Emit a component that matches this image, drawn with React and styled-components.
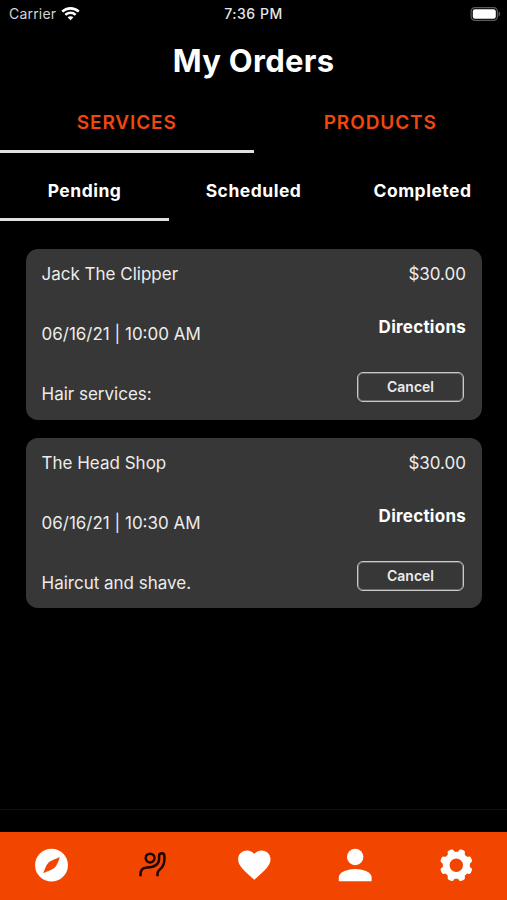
import styled, { createGlobalStyle } from "styled-components";
import { useState } from "react";

const GlobalStyle = createGlobalStyle`
  * {
    box-sizing: border-box;
  }
  body {
    margin: 0;
    background-color: #000;
    color: #fff;
    font-family: Inter, "Liberation Sans", sans-serif;
  }
  button {
    padding: 0;
    border: none;
    background: none;
    color: inherit;
    font-family: inherit;
    cursor: pointer;
  }
`;

const Screen = styled.div`
  width: 507px;
  height: 900px;
  display: flex;
  flex-direction: column;
  background-color: #000;
  overflow: hidden;
`;
const StatusBar = styled.div`
  height: 27px;
  padding: 0 6px 0 9px;
  display: grid;
  grid-template-columns: 1fr auto 1fr;
  align-items: center;
  font-size: 14px;
  line-height: 27px;
`;
const Carrier = styled.div`
  display: flex;
  align-items: center;
  gap: 5px;
  color: #d4d4d4;
  letter-spacing: 0.2px;
`;
const Clock = styled.div`
  margin-right: 3px;
  color: #e6e6e6;
  font-weight: 500;
  letter-spacing: 0.5px;
`;
const BatteryBox = styled.div`
  display: flex;
  justify-content: flex-end;
`;
const Title = styled.h1`
  height: 66px;
  margin: 0;
  text-align: center;
  font-size: 31px;
  font-weight: 700;
  line-height: 67px;
  letter-spacing: 0.3px;
`;
const Tabs = styled.div`
  display: flex;
`;
const MainTab = styled.button`
  flex: 1;
  height: 60px;
  padding-top: 1px;
  border-bottom: 3px solid ${(props) => (props.$active ? "#e0e0e0" : "transparent")};
  color: #f0470f;
  font-size: 19px;
  font-weight: 600;
  letter-spacing: 0.9px;
`;
const SubTab = styled.button`
  flex: 1;
  height: 68px;
  padding-top: 9px;
  border-bottom: 3px solid ${(props) => (props.$active ? "#e0e0e0" : "transparent")};
  font-size: 17.5px;
  font-weight: 700;
  letter-spacing: 0.5px;
`;
const Orders = styled.div`
  flex: 1;
  padding: 28px 25.5px 0 26px;
  display: flex;
  flex-direction: column;
  gap: 18px;
`;
const Card = styled.div`
  height: 170.5px;
  padding: 15px 15.5px 15px 15.5px;
  display: flex;
  justify-content: space-between;
  background-color: #373737;
  border-radius: 12px;
  color: #ececec;
  font-size: 17px;
  line-height: 20px;
`;
const Details = styled.div`
  display: flex;
  flex-direction: column;
  gap: 40px;
`;
const Actions = styled.div`
  display: flex;
  flex-direction: column;
  align-items: flex-end;
`;
const Directions = styled.button`
  margin-top: 33px;
  color: #fff;
  font-size: 17px;
  font-weight: 700;
  line-height: 20px;
  letter-spacing: 0.25px;
`;
const CancelButton = styled.button`
  width: 107px;
  height: 30px;
  margin: 35px 2px 0 0;
  padding-bottom: 1px;
  border: 1px solid #c9c9c9;
  border-radius: 6px;
  box-shadow: inset 0 0 0 1px #6c6c6c;
  font-size: 14px;
  font-weight: 600;
`;
const Divider = styled.div`
  height: 23px;
  border-top: 1px solid #111;
`;
const BottomNav = styled.div`
  height: 68px;
  padding-bottom: 2px;
  display: flex;
  background-color: #f24500;
`;
const NavItem = styled.button`
  flex: 1;
  display: flex;
  align-items: center;
  justify-content: center;
  color: ${(props) => (props.$active ? "#1c0500" : "#fff")};
`;

const WifiIcon = () => (
  <svg width="19" height="14" viewBox="0 0 19 14" fill="#fff">
    <path d="M9.5 0C6 0 2.8 1.4.3 3.7l1.8 1.9a10.7 10.7 0 0 1 14.8 0l1.8-1.9A13.4 13.4 0 0 0 9.5 0z" />
    <path d="M9.5 4.6c-2.3 0-4.4.9-6 2.4l1.7 1.8a6.2 6.2 0 0 1 8.6 0L15.5 7a8.7 8.7 0 0 0-6-2.4z" />
    <path d="M9.5 9.2c-1.1 0-2.1.4-2.9 1.1l2.9 3 2.9-3c-.8-.7-1.8-1.1-2.9-1.1z" />
  </svg>
);

const BatteryIcon = () => (
  <svg width="31" height="14" viewBox="0 0 31 14">
    <rect x="1.1" y=".6" width="26.3" height="12.8" rx="3.8" fill="none" stroke="#5c5c5c" strokeWidth="1.2" />
    <rect x="2.8" y="2.2" width="23" height="9.6" rx="2.2" fill="#fff" />
    <path d="M28.6 4.6v4.8c1-.4 1.6-1.3 1.6-2.4s-.6-2-1.6-2.4z" fill="#5c5c5c" />
  </svg>
);

const CompassIcon = () => (
  <svg width="34" height="34" viewBox="0 0 34 34">
    <circle cx="17.5" cy="17.2" r="16.4" fill="currentColor" />
    <path d="M25.8 8.9C24.5 13.5 22.5 18.5 19.500 20.600 16.800 22.500 12.500 23.700 9.400 25.300 10.600 21.500 12.500 16 15.500 13.800 18.500 11.600 22.500 10.500 25.800 8.900z" fill="#f24500" />
  </svg>
);

const WaveIcon = () => (
  <svg width="34" height="34" viewBox="0 0 34 34" fill="none" stroke="currentColor" strokeWidth="2.5">
    <circle cx="15.1" cy="10.1" r="4.4" />
    <path d="M5.5 28.2v-1.7c0-4 2.400-6.700 6.300-6.900 7-.3 12.100-2.500 12.300-8.600V8.200c0-3.900 5.300-3.900 5.300 0v2.600c0 4.500-1 7.500-3.700 9.800-2 1.700-3.200 2.600-3.200 4.900v2.700" />
  </svg>
);

const HeartIcon = () => (
  <svg width="34" height="34" viewBox="0 0 34 34" fill="currentColor">
    <path d="M17.3 31.800 15 29.700C6.600 22.200 1.100 17.300 1.100 11.200 1.100 6.300 4.900 2.500 10 2.500c2.900 0 5.600 1.300 7.300 3.400 1.700-2.100 4.400-3.400 7.300-3.400 5.100 0 8.900 3.800 8.900 8.700 0 6.100-5.500 11-13.900 18.500z" />
  </svg>
);

const PersonIcon = () => (
  <svg width="34" height="34" viewBox="0 0 34 34" fill="currentColor">
    <circle cx="17.200" cy="9" r="8.200" />
    <path d="M.8 33.300v-4.100c0-5.500 9.500-8.300 16.400-8.300s16.400 2.800 16.400 8.300v4.100z" />
  </svg>
);

const GearIcon = () => (
  <svg width="34" height="34" viewBox="0 0 34 34" fill="currentColor">
    <path
      fillRule="evenodd"
      d="M17.300 3.700A13.500 13.500 0 1 0 17.300 30.700 13.500 13.500 0 1 0 17.300 3.700zM17.300 10.500A6.700 6.700 0 1 1 17.300 23.900 6.700 6.700 0 1 1 17.300 10.500z"
    />
    {[22.5, 67.5, 112.5, 157.5, 202.5, 247.5, 292.5, 337.5].map((angle) => (
      <path
        key={angle}
        d="M11.900 5.500Q13.500 4.400 13.700 2.600 13.800.7 15.800.6h2.400q2 .1 2.100 2 .2 1.800 1.800 2.900z"
        transform={`translate(.3 .2) rotate(${angle} 17 17)`}
      />
    ))}
  </svg>
);

const orders = [
  { id: 1, shop: "Jack The Clipper", time: "06/16/21 | 10:00 AM", note: "Hair services:", price: "$30.00" },
  { id: 2, shop: "The Head Shop", time: "06/16/21 | 10:30 AM", note: "Haircut and shave.", price: "$30.00" },
];

const navIcons = [CompassIcon, WaveIcon, HeartIcon, PersonIcon, GearIcon];

export default function App() {
  const [mainTab, setMainTab] = useState("SERVICES");
  const [subTab, setSubTab] = useState("Pending");
  const [page, setPage] = useState(1);

  return (
    <Screen>
      <GlobalStyle />
      <StatusBar>
        <Carrier>
          <span>Carrier</span>
          <WifiIcon />
        </Carrier>
        <Clock>7:36 PM</Clock>
        <BatteryBox>
          <BatteryIcon />
        </BatteryBox>
      </StatusBar>
      <Title>My Orders</Title>
      <Tabs>
        {["SERVICES", "PRODUCTS"].map((tab) => (
          <MainTab key={tab} $active={tab === mainTab} onClick={() => setMainTab(tab)}>
            {tab}
          </MainTab>
        ))}
      </Tabs>
      <Tabs>
        {["Pending", "Scheduled", "Completed"].map((tab) => (
          <SubTab key={tab} $active={tab === subTab} onClick={() => setSubTab(tab)}>
            {tab}
          </SubTab>
        ))}
      </Tabs>
      <Orders>
        {orders.map((order) => (
          <Card key={order.id}>
            <Details>
              <span>{order.shop}</span>
              <span>{order.time}</span>
              <span>{order.note}</span>
            </Details>
            <Actions>
              <span>{order.price}</span>
              <Directions>Directions</Directions>
              <CancelButton>Cancel</CancelButton>
            </Actions>
          </Card>
        ))}
      </Orders>
      <Divider />
      <BottomNav>
        {navIcons.map((Icon, index) => (
          <NavItem key={index} $active={index === page} onClick={() => setPage(index)}>
            <Icon />
          </NavItem>
        ))}
      </BottomNav>
    </Screen>
  );
}
